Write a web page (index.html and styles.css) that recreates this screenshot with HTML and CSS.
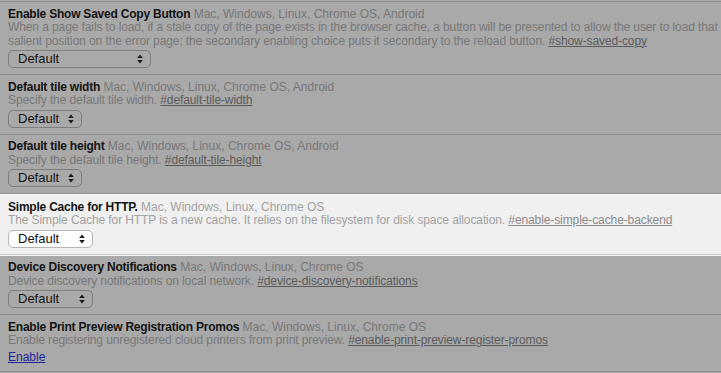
FILE: index.html
```html
<!DOCTYPE html>
<html lang="en">

<head>
    <meta charset="UTF-8">
    <meta name="viewport" content="width=device-width, initial-scale=1.0">
    <title>Experiments</title>
    <link rel="stylesheet" href="styles.css">
</head>

<body>

    <div class="experiment-list">
        <div class="experiment">
            <div class="experiment-head"><span class="experiment-name">Enable Show Saved Copy Button</span> <span class="platforms">Mac, Windows, Linux, Chrome OS, Android</span></div>
            <div class="experiment-desc">When a page fails to load, if a stale copy of the page exists in the browser cache, a button will be presented to allow the user to load that salient position on the error page; the secondary enabling choice puts it secondary to the reload button. <a href="#show-saved-copy">#show-saved-copy</a></div>
            <div class="popup popup-wide"><span>Default</span><svg width="6" height="10" viewBox="0 0 6 10"><path d="M3 0.5 L5.8 4 H0.2 Z M3 9.5 L5.8 6 H0.2 Z" /></svg></div>
        </div>

        <div class="experiment">
            <div class="experiment-head"><span class="experiment-name">Default tile width</span> <span class="platforms">Mac, Windows, Linux, Chrome OS, Android</span></div>
            <div class="experiment-desc">Specify the default tile width. <a href="#default-tile-width">#default-tile-width</a></div>
            <div class="popup popup-small"><span>Default</span><svg width="6" height="10" viewBox="0 0 6 10"><path d="M3 0.5 L5.8 4 H0.2 Z M3 9.5 L5.8 6 H0.2 Z" /></svg></div>
        </div>

        <div class="experiment">
            <div class="experiment-head"><span class="experiment-name">Default tile height</span> <span class="platforms">Mac, Windows, Linux, Chrome OS, Android</span></div>
            <div class="experiment-desc">Specify the default tile height. <a href="#default-tile-height">#default-tile-height</a></div>
            <div class="popup popup-small"><span>Default</span><svg width="6" height="10" viewBox="0 0 6 10"><path d="M3 0.5 L5.8 4 H0.2 Z M3 9.5 L5.8 6 H0.2 Z" /></svg></div>
        </div>

        <div class="experiment referenced">
            <div class="experiment-head"><span class="experiment-name">Simple Cache for HTTP.</span> <span class="platforms">Mac, Windows, Linux, Chrome OS</span></div>
            <div class="experiment-desc">The Simple Cache for HTTP is a new cache. It relies on the filesystem for disk space allocation. <a href="#enable-simple-cache-backend">#enable-simple-cache-backend</a></div>
            <div class="popup popup-mid"><span>Default</span><svg width="6" height="10" viewBox="0 0 6 10"><path d="M3 0.5 L5.8 4 H0.2 Z M3 9.5 L5.8 6 H0.2 Z" /></svg></div>
        </div>

        <div class="experiment">
            <div class="experiment-head"><span class="experiment-name">Device Discovery Notifications</span> <span class="platforms">Mac, Windows, Linux, Chrome OS</span></div>
            <div class="experiment-desc">Device discovery notifications on local network. <a href="#device-discovery-notifications">#device-discovery-notifications</a></div>
            <div class="popup popup-mid"><span>Default</span><svg width="6" height="10" viewBox="0 0 6 10"><path d="M3 0.5 L5.8 4 H0.2 Z M3 9.5 L5.8 6 H0.2 Z" /></svg></div>
        </div>

        <div class="experiment">
            <div class="experiment-head"><span class="experiment-name">Enable Print Preview Registration Promos</span> <span class="platforms">Mac, Windows, Linux, Chrome OS</span></div>
            <div class="experiment-desc">Enable registering unregistered cloud printers from print preview. <a href="#enable-print-preview-register-promos">#enable-print-preview-register-promos</a></div>
            <a class="enable-link" href="#enable">Enable</a>
        </div>
    </div>

</body>

</html>
```

FILE: styles.css
```css
body {
    margin: 0;
    background-color: #a9a9a9;
    font-family: "Liberation Sans", Arial, sans-serif;
    font-size: 12px;
    color: #141414;
}

.experiment-list {
    border-top: 1px solid #8e8e8e;
    margin-top: 1px;
}

.experiment {
    padding: 5.5px 2px 6px 8px;
    border-bottom: 1px solid #8e8e8e;
    line-height: 13.5px;
}

.experiment-name {
    font-weight: bold;
    color: #141414;
    letter-spacing: -0.22px;
}

.platforms {
    color: #787878;
}

.experiment-desc {
    color: #787878;
    letter-spacing: -0.1px;
}

.experiment-desc a {
    color: #5c5c5c;
}

/* the one the url points at is not dimmed */
.referenced {
    background-color: #f0f0f0;
    border-top: 1px solid #fbfbfb;
    border-bottom: 1px solid #cbcbcb;
    box-shadow: 0 1px 0 #f4f4f4;
    margin-bottom: 1px;
}

.referenced .platforms,
.referenced .experiment-desc {
    color: #a2a2a2;
}

.referenced .experiment-desc a {
    color: #8c8c8c;
}

.popup {
    display: flex;
    align-items: center;
    justify-content: space-between;
    box-sizing: border-box;
    height: 18px;
    margin-top: 2px;
    padding: 0 7px 0 9px;
    border: 1px solid #7e7e7e;
    border-radius: 5px;
    font-size: 13px;
    line-height: 16px;
    color: #141414;
}

.popup svg path {
    fill: #1a1a1a;
}

.referenced .popup {
    background-color: #fdfdfd;
    border-color: #b6b6b6;
}

.popup-wide {
    width: 143px;
}

.popup-small {
    width: 74px;
}

.popup-mid {
    width: 85px;
}

.enable-link {
    display: inline-block;
    margin-top: 1px;
    line-height: 16px;
    color: #23239c;
}
```
